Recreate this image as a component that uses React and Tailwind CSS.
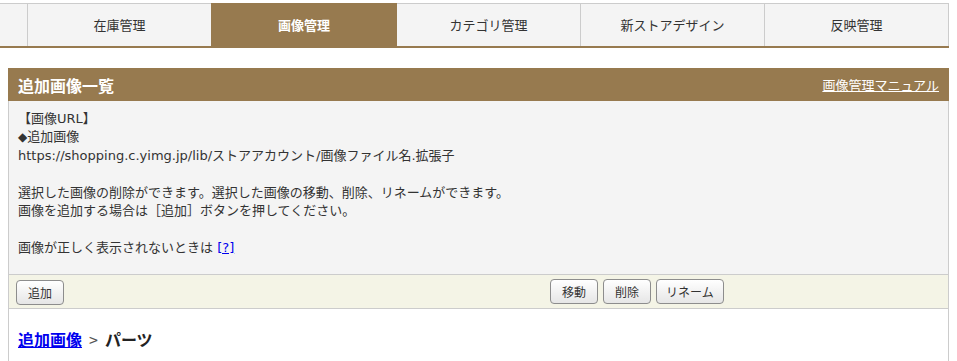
import React from "react";

const font = { fontFamily: '"Noto Sans CJK JP", "Noto Sans", sans-serif' };
const bodyFont = { fontFamily: '"DejaVu Sans", "Noto Sans CJK JP", sans-serif' };

function Btn({ children, className = "px-[11px]" }) {
  return (
    <button
      className={
        "h-[25px] rounded-[4px] border border-[#8d8d8d] bg-gradient-to-b from-[#ffffff] to-[#e6e6e6] text-[12px] leading-none text-[#333] " +
        className
      }
    >
      {children}
    </button>
  );
}

export default function App() {
  return (
    <div className="min-h-[361px] w-[957px] bg-white text-[#333]" style={font}>
      {/* tabs */}
      <div className="pt-[3px]">
        <div className="flex w-[949px] border-b-2 border-[#977a4f] text-[13px]">
          <div className="h-[43px] w-[28px] border-t border-r border-[#cccccc] bg-[#f4f4f4]" />
          <div className="flex h-[43px] w-[183px] items-center justify-center border-t border-[#cccccc] bg-[#f4f4f4]">
            在庫管理
          </div>
          <div className="flex h-[43px] w-[186px] items-center justify-center bg-[#977a4f] font-bold text-white">
            画像管理
          </div>
          <div className="flex h-[43px] w-[184px] items-center justify-center border-t border-r border-[#cccccc] bg-[#f4f4f4]">
            カテゴリ管理
          </div>
          <div className="flex h-[43px] w-[184px] items-center justify-center border-t border-r border-[#cccccc] bg-[#f4f4f4]">
            新ストアデザイン
          </div>
          <div className="flex h-[43px] w-[184px] items-center justify-center border-t border-r border-[#cccccc] bg-[#f4f4f4]">
            反映管理
          </div>
        </div>
      </div>

      {/* section */}
      <div className="ml-[8px] mt-[20px] w-[941px]">
        <div className="flex h-[33px] items-center justify-between bg-[#977a4f] pl-[10px] pr-[10px] text-white">
          <span className="text-[16px] font-bold">追加画像一覧</span>
          <a className="text-[13px] underline" href="#">
            画像管理マニュアル
          </a>
        </div>
        <div
          className="border-x border-[#cccccc] bg-[#f4f4f4] pl-[9px] pt-[9px] pb-[17px] text-[13px] leading-[18.4px]"
          style={bodyFont}
        >
          <div>【画像URL】</div>
          <div>
            <span className="text-[12px]">◆</span>追加画像
          </div>
          <div>https://shopping.c.yimg.jp/lib/ストアアカウント/画像ファイル名.拡張子</div>
          <div>&nbsp;</div>
          <div>選択した画像の削除ができます。選択した画像の移動、削除、リネームができます。</div>
          <div>画像を追加する場合は［追加］ボタンを押してください。</div>
          <div>&nbsp;</div>
          <div>
            画像が正しく表示されないときは{" "}
            <a href="#" className="text-[#0000ee] underline">
              [?]
            </a>
          </div>
        </div>
        <div className="flex h-[35px] items-center border border-[#cccccc] bg-[#f4f4e6] pl-[7px]">
          <div className="w-[534px]">
            <Btn>追加</Btn>
          </div>
          <div className="flex gap-[5px]">
            <Btn>移動</Btn>
            <Btn>削除</Btn>
            <Btn className="px-[9px]">リネーム</Btn>
          </div>
        </div>
        <div className="h-[52px] border-x border-[#cccccc] bg-white pl-[9px] pt-[18px] text-[16px] leading-[24px]">
          <a href="#" className="font-bold text-[#0000ee] underline">
            追加画像
          </a>
          <span className="mx-[7px] text-[#555]">&gt;</span>
          <span className="font-bold text-[#222]">パーツ</span>
        </div>
      </div>
    </div>
  );
}
